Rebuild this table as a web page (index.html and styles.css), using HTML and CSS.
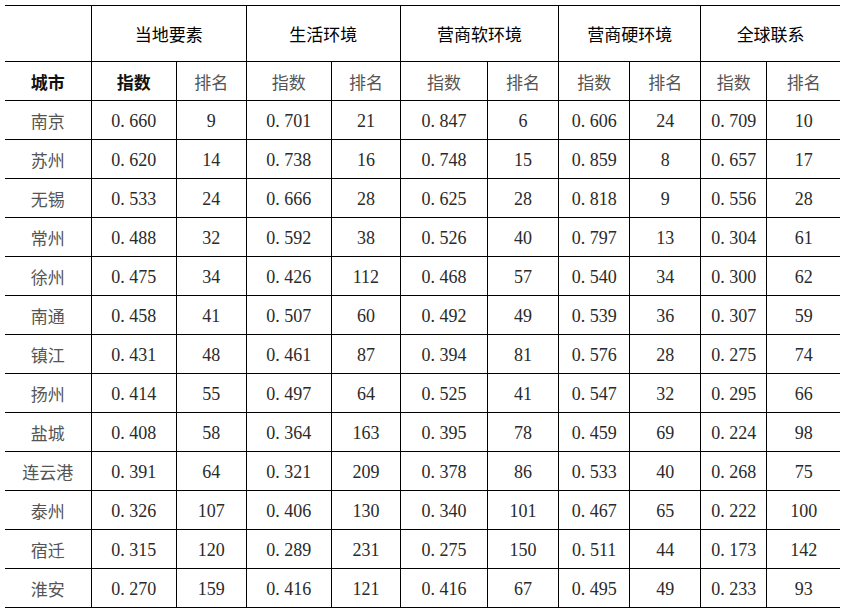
FILE: index.html
```html
<!DOCTYPE html>
<html lang="zh-CN">
<head>
<meta charset="utf-8">
<title>城市指数排名</title>
<link rel="stylesheet" href="styles.css">
</head>
<body>
<table class="rank">
  <colgroup>
    <col class="c-city">
    <col class="c86"><col class="c70">
    <col class="c86"><col class="c69">
    <col class="c87"><col class="c71">
    <col class="c71"><col class="c71">
    <col class="c66"><col class="c73">
  </colgroup>
  <thead>
    <tr class="group">
      <th class="blank"></th>
      <th colspan="2">当地要素</th>
      <th colspan="2">生活环境</th>
      <th colspan="2">营商软环境</th>
      <th colspan="2">营商硬环境</th>
      <th colspan="2">全球联系</th>
    </tr>
    <tr class="sub">
      <th class="strong">城市</th>
      <th class="strong">指数</th><th>排名</th>
      <th>指数</th><th>排名</th>
      <th>指数</th><th>排名</th>
      <th>指数</th><th>排名</th>
      <th>指数</th><th>排名</th>
    </tr>
  </thead>
  <tbody>
    <tr><td class="city">南京</td><td>0<span class="pt">.</span>660</td><td>9</td><td>0<span class="pt">.</span>701</td><td>21</td><td>0<span class="pt">.</span>847</td><td>6</td><td>0<span class="pt">.</span>606</td><td>24</td><td>0<span class="pt">.</span>709</td><td>10</td></tr>
    <tr><td class="city">苏州</td><td>0<span class="pt">.</span>620</td><td>14</td><td>0<span class="pt">.</span>738</td><td>16</td><td>0<span class="pt">.</span>748</td><td>15</td><td>0<span class="pt">.</span>859</td><td>8</td><td>0<span class="pt">.</span>657</td><td>17</td></tr>
    <tr><td class="city">无锡</td><td>0<span class="pt">.</span>533</td><td>24</td><td>0<span class="pt">.</span>666</td><td>28</td><td>0<span class="pt">.</span>625</td><td>28</td><td>0<span class="pt">.</span>818</td><td>9</td><td>0<span class="pt">.</span>556</td><td>28</td></tr>
    <tr><td class="city">常州</td><td>0<span class="pt">.</span>488</td><td>32</td><td>0<span class="pt">.</span>592</td><td>38</td><td>0<span class="pt">.</span>526</td><td>40</td><td>0<span class="pt">.</span>797</td><td>13</td><td>0<span class="pt">.</span>304</td><td>61</td></tr>
    <tr><td class="city">徐州</td><td>0<span class="pt">.</span>475</td><td>34</td><td>0<span class="pt">.</span>426</td><td>112</td><td>0<span class="pt">.</span>468</td><td>57</td><td>0<span class="pt">.</span>540</td><td>34</td><td>0<span class="pt">.</span>300</td><td>62</td></tr>
    <tr><td class="city">南通</td><td>0<span class="pt">.</span>458</td><td>41</td><td>0<span class="pt">.</span>507</td><td>60</td><td>0<span class="pt">.</span>492</td><td>49</td><td>0<span class="pt">.</span>539</td><td>36</td><td>0<span class="pt">.</span>307</td><td>59</td></tr>
    <tr><td class="city">镇江</td><td>0<span class="pt">.</span>431</td><td>48</td><td>0<span class="pt">.</span>461</td><td>87</td><td>0<span class="pt">.</span>394</td><td>81</td><td>0<span class="pt">.</span>576</td><td>28</td><td>0<span class="pt">.</span>275</td><td>74</td></tr>
    <tr><td class="city">扬州</td><td>0<span class="pt">.</span>414</td><td>55</td><td>0<span class="pt">.</span>497</td><td>64</td><td>0<span class="pt">.</span>525</td><td>41</td><td>0<span class="pt">.</span>547</td><td>32</td><td>0<span class="pt">.</span>295</td><td>66</td></tr>
    <tr><td class="city">盐城</td><td>0<span class="pt">.</span>408</td><td>58</td><td>0<span class="pt">.</span>364</td><td>163</td><td>0<span class="pt">.</span>395</td><td>78</td><td>0<span class="pt">.</span>459</td><td>69</td><td>0<span class="pt">.</span>224</td><td>98</td></tr>
    <tr><td class="city">连云港</td><td>0<span class="pt">.</span>391</td><td>64</td><td>0<span class="pt">.</span>321</td><td>209</td><td>0<span class="pt">.</span>378</td><td>86</td><td>0<span class="pt">.</span>533</td><td>40</td><td>0<span class="pt">.</span>268</td><td>75</td></tr>
    <tr><td class="city">泰州</td><td>0<span class="pt">.</span>326</td><td>107</td><td>0<span class="pt">.</span>406</td><td>130</td><td>0<span class="pt">.</span>340</td><td>101</td><td>0<span class="pt">.</span>467</td><td>65</td><td>0<span class="pt">.</span>222</td><td>100</td></tr>
    <tr><td class="city">宿迁</td><td>0<span class="pt">.</span>315</td><td>120</td><td>0<span class="pt">.</span>289</td><td>231</td><td>0<span class="pt">.</span>275</td><td>150</td><td>0<span class="pt">.</span>511</td><td>44</td><td>0<span class="pt">.</span>173</td><td>142</td></tr>
    <tr><td class="city">淮安</td><td>0<span class="pt">.</span>270</td><td>159</td><td>0<span class="pt">.</span>416</td><td>121</td><td>0<span class="pt">.</span>416</td><td>67</td><td>0<span class="pt">.</span>495</td><td>49</td><td>0<span class="pt">.</span>233</td><td>93</td></tr>
  </tbody>
</table>
</body>
</html>
```

FILE: styles.css
```css
html, body {
  margin: 0;
  padding: 0;
  background: #ffffff;
}

body {
  padding: 5px;
}

.rank {
  border-collapse: collapse;
  table-layout: fixed;
  width: 835px;
  font-family: "Liberation Serif", "Noto Sans CJK SC", serif;
  font-size: 18px;
  color: #2a2a2a;
}

.c-city { width: 86px; }
.c86 { width: 85px; }
.c70 { width: 70px; }
.c69 { width: 69px; }
.c87 { width: 87px; }
.c71 { width: 71px; }
.c66 { width: 66px; }
.c73 { width: 73px; }

.rank th,
.rank td {
  border: 1px solid #000;
  padding: 0;
  text-align: center;
  vertical-align: middle;
}

.rank tr > :first-child { border-left: none; }
.rank tr > :last-child { border-right: none; }

.group th {
  height: 55px;
  font-family: "Noto Sans CJK SC", sans-serif;
  font-size: 17px;
  font-weight: 400;
  color: #000;
}

.sub th {
  height: 37px;
  padding-top: 1px;
  font-family: "Noto Sans CJK SC", sans-serif;
  font-size: 17px;
  font-weight: 400;
  color: #555;
}

.sub th.strong {
  font-weight: 700;
  color: #111;
}

.rank td {
  height: 35px;
  padding-top: 3px;
}

.rank td.city {
  font-family: "Noto Sans CJK SC", sans-serif;
  font-size: 17px;
  color: #555;
  padding-top: 0;
  height: 38px;
}

.pt {
  display: inline-block;
  width: 9px;
  text-align: left;
}
```
